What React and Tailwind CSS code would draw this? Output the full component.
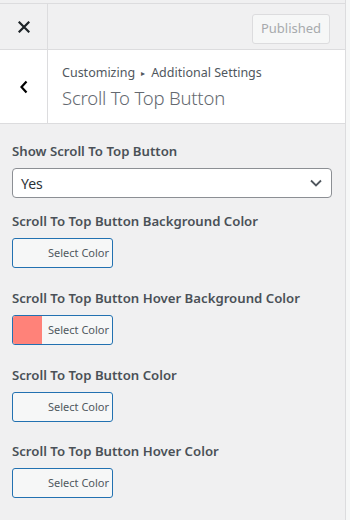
import React from "react";

function ColorButton({ color }) {
  return (
    <div className="flex h-[30px] w-[101px] overflow-hidden rounded-[3px] border border-[#2271b1] bg-[#f6f7f7]">
      <div className="w-[29px] h-full" style={{ background: color || "transparent" }} />
      <div className="flex flex-1 items-center pl-[6px] text-[11px] text-[#50575e]">Select Color</div>
    </div>
  );
}

function Control({ label, children, className = "" }) {
  return (
    <div className={"flex flex-col " + className}>
      <div className="text-[13.2px] font-semibold leading-[20px] text-[#4a5057]">{label}</div>
      <div className="mt-[7px]">{children}</div>
    </div>
  );
}

export default function App() {
  return (
    <div
      className="flex h-[520px] w-[350px] overflow-hidden bg-[#f6f7f7]"
      style={{ fontFamily: '"Noto Sans", "Open Sans", sans-serif' }}
    >
      <div className="flex w-[346px] flex-col border-r border-[#dcdcde] bg-[#f0f0f1] pt-[3px]">
        <div className="flex h-[47px] border-y border-[#dcdcde] bg-[#f0f0f1]">
          <div className="flex w-[48px] items-center justify-center border-r border-[#dcdcde]">
            <svg width="12" height="12" viewBox="0 0 12 12">
              <path d="M1.5 1.5 L10.5 10.5 M10.5 1.5 L1.5 10.5" stroke="#1d2327" strokeWidth="2.2" strokeLinecap="square" />
            </svg>
          </div>
          <div className="flex flex-1 items-center justify-end pr-[15px] pt-[4px]">
            <div className="flex h-[30px] w-[78px] items-center justify-center rounded-[3px] border border-[#dcdcde] bg-[#f6f7f7] text-[13px] text-[#a7aaad]">
              Published
            </div>
          </div>
        </div>
        <div className="flex h-[74px] border-b border-[#dcdcde] bg-white">
          <div className="flex w-[48px] items-center justify-center border-r border-[#dcdcde]">
            <svg width="10" height="14" viewBox="0 0 10 14">
              <path d="M7.5 1.5 L2.5 7 L7.5 12.5" stroke="#000" strokeWidth="2.2" fill="none" />
            </svg>
          </div>
          <div className="flex flex-col justify-center pl-[14px] pt-[2px]">
            <div className="flex items-center text-[12.5px] leading-[18px] text-[#50575e]">
              <span>Customizing</span>
              <span className="mx-[6px] text-[8px]">▸</span>
              <span>Additional Settings</span>
            </div>
            <div className="mt-[3px] text-[18.5px] font-light leading-[26px] tracking-[-0.2px] text-[#646970]">Scroll To Top Button</div>
          </div>
        </div>
        <div className="flex flex-col px-[12px] pt-[17px]">
          <Control label="Show Scroll To Top Button">
            <div className="flex h-[30px] w-[320px] items-center justify-between rounded-[4px] border border-[#8c8f94] bg-white pl-[8px] pr-[8px] text-[14px] text-[#2c3338]">
              <span>Yes</span>
              <svg width="14" height="10" viewBox="0 0 14 10">
                <path d="M2 2.5 L7 7.5 L12 2.5" stroke="#50575e" strokeWidth="1.8" fill="none" />
              </svg>
            </div>
          </Control>
          <Control className="mt-[13px]" label="Scroll To Top Button Background Color">
            <ColorButton />
          </Control>
          <Control className="mt-[20px]" label="Scroll To Top Button Hover Background Color">
            <ColorButton color="#ff8279" />
          </Control>
          <Control className="mt-[20px]" label="Scroll To Top Button Color">
            <ColorButton />
          </Control>
          <Control className="mt-[19px]" label="Scroll To Top Button Hover Color">
            <ColorButton />
          </Control>
        </div>
      </div>
    </div>
  );
}
